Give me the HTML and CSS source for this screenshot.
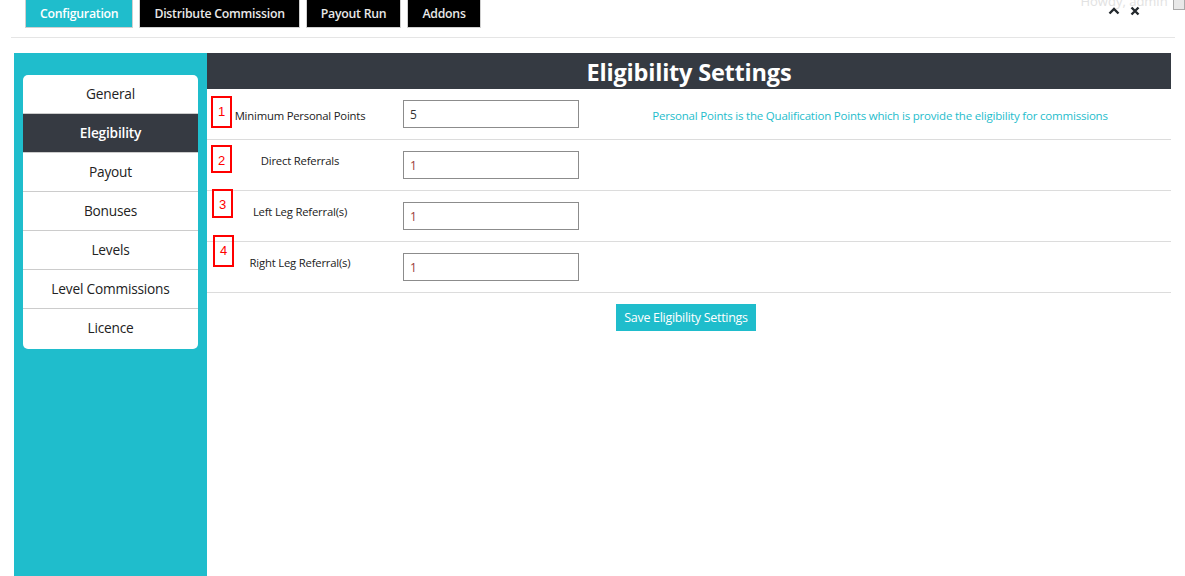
FILE: index.html
```
<!DOCTYPE html>
<html lang="en">
<head>
  <meta charset="UTF-8" />
  <title>Configuration - Eligibility</title>
  <link rel="stylesheet" href="styles.css">
</head>
<body>
  <div class="topbar">
    <div class="tabs">
      <a class="tab active">Configuration</a>
      <a class="tab">Distribute Commission</a>
      <a class="tab">Payout Run</a>
      <a class="tab">Addons</a>
    </div>
    <div class="howdy">Howdy, admin <span class="avatar"></span></div>
    <div class="panel-icons">
      <svg width="12" height="8" viewBox="0 0 12 8"><path d="M1.5 6.5 L6 2 L10.5 6.5" fill="none" stroke="#23282d" stroke-width="2.4"/></svg>
      <svg width="10" height="10" viewBox="0 0 10 10"><path d="M1.5 1.5 L8.5 8.5 M8.5 1.5 L1.5 8.5" fill="none" stroke="#23282d" stroke-width="2.4"/></svg>
    </div>
  </div>
  <div class="divider"></div>

  <div class="layout">
    <div class="sidebar">
      <ul class="menu">
        <li>General</li>
        <li class="current">Elegibility</li>
        <li>Payout</li>
        <li>Bonuses</li>
        <li>Levels</li>
        <li>Level Commissions</li>
        <li>Licence</li>
      </ul>
    </div>

    <div class="main">
      <h2 class="title">Eligibility Settings</h2>

      <div class="row first">
        <label>Minimum Personal Points</label>
        <input type="text" value="5" class="dark" />
        <p class="help">Personal Points is the Qualification Points which is provide the eligibility for commissions</p>
      </div>
      <div class="row">
        <label>Direct Referrals</label>
        <input type="text" value="1" />
        <p class="help"></p>
      </div>
      <div class="row">
        <label>Left Leg Referral(s)</label>
        <input type="text" value="1" />
        <p class="help"></p>
      </div>
      <div class="row">
        <label>Right Leg Referral(s)</label>
        <input type="text" value="1" />
        <p class="help"></p>
      </div>

      <div class="actions">
        <button>Save Eligibility Settings</button>
      </div>

      <span class="mark m1">1</span>
      <span class="mark m2">2</span>
      <span class="mark m3">3</span>
      <span class="mark m4">4</span>
    </div>
  </div>
</body>
</html>
```

FILE: styles.css
```
body {
  margin: 0;
  background: #fff;
  font-family: "Open Sans", "Noto Sans", sans-serif;
  color: #32373c;
  overflow: hidden;
}
.topbar {
  position: relative;
  height: 37px;
  padding-left: 25px;
}
.tabs {
  display: flex;
  gap: 6px;
}
.tab {
  display: block;
  height: 27px;
  line-height: 28px;
  padding: 0 14px;
  background: #000;
  color: #e8e8e8;
  font-size: 12.3px;
  font-weight: 600;
  border: 1px solid #d0d0d0;
  border-top: none;
  letter-spacing: -0.25px;
}
.tab.active {
  background: #1fbdcc;
  color: #fff;
}
.howdy {
  position: absolute;
  top: -8px;
  right: 0;
  font-size: 13px;
  color: #e2e2e2;
  white-space: nowrap;
}
.avatar {
  display: inline-block;
  width: 10px;
  height: 12px;
  border: 1px solid #aaa;
  background: #e8e8e8;
  vertical-align: middle;
  margin-left: 2px;
}
.panel-icons {
  position: absolute;
  top: 6px;
  right: 45px;
  display: flex;
  gap: 10px;
  align-items: center;
}
.divider {
  margin: 0 10px 0 11px;
  border-top: 1px solid #e5e5e5;
}
.layout {
  display: flex;
  margin: 15px 14px 0 14px;
  height: 540px;
}
.sidebar {
  width: 193px;
  background: #1fbdcc;
  padding: 22px 9px 0 9px;
  box-sizing: border-box;
}
.menu {
  list-style: none;
  margin: 0;
  padding: 0;
  background: #fff;
  border-radius: 5px;
  overflow: hidden;
}
.menu li {
  height: 38px;
  line-height: 37px;
  text-align: center;
  font-size: 13.7px;
  color: #222;
  border-bottom: 1px solid #ccc;
  letter-spacing: -0.2px;
}
.menu li:last-child {
  border-bottom: none;
  height: 40px;
}
.menu li.current {
  background: #363a42;
  color: #fff;
  font-weight: 600;
}
.main {
  position: relative;
  width: 964px;
}
.title {
  margin: 0;
  height: 36px;
  line-height: 39px;
  background: #353a42;
  color: #fff;
  text-align: center;
  font-size: 23.5px;
  font-weight: 700;
  letter-spacing: -0.2px;
}
.row {
  display: grid;
  grid-template-columns: 186px 176px 1fr;
  column-gap: 10px;
  border-bottom: 1px solid #dcdcdc;
  padding-top: 11px;
  height: 39px;
}
.row label {
  text-align: center;
  font-size: 11.3px;
  color: #222;
  margin-top: 2px;
  letter-spacing: -0.2px;
}
.row.first label {
  margin-top: 8px;
}
.row input {
  height: 28px;
  box-sizing: border-box;
  border: 1px solid #8c8c8c;
  padding: 0 6px;
  font-family: inherit;
  font-size: 12px;
  color: #9a3b3b;
  outline: none;
}
.row input.dark {
  color: #333;
}
.help {
  margin: 8px 0 0 0;
  text-align: center;
  font-size: 11.5px;
  color: #1fbdcc;
  letter-spacing: -0.2px;
}
.actions {
  display: flex;
  justify-content: center;
  padding-top: 11px;
  padding-right: 6px;
}
.actions button {
  height: 27px;
  padding: 0 8px;
  border: none;
  background: #1fbdcc;
  color: #fff;
  font-family: inherit;
  font-size: 12.5px;
  letter-spacing: -0.3px;
}
.mark {
  position: absolute;
  width: 17px;
  border: 2.5px solid #f00;
  color: #f00;
  font-family: "Liberation Sans", sans-serif;
  font-size: 13px;
  text-align: center;
  padding-top: 6px;
  box-sizing: content-box;
}
.m1 { left: 4px; top: 43px; height: 22px; }
.m2 { left: 4px; top: 92px; height: 18px; }
.m3 { left: 5px; top: 136px; height: 19px; }
.m4 { left: 6px; top: 182px; height: 22px; }
```
